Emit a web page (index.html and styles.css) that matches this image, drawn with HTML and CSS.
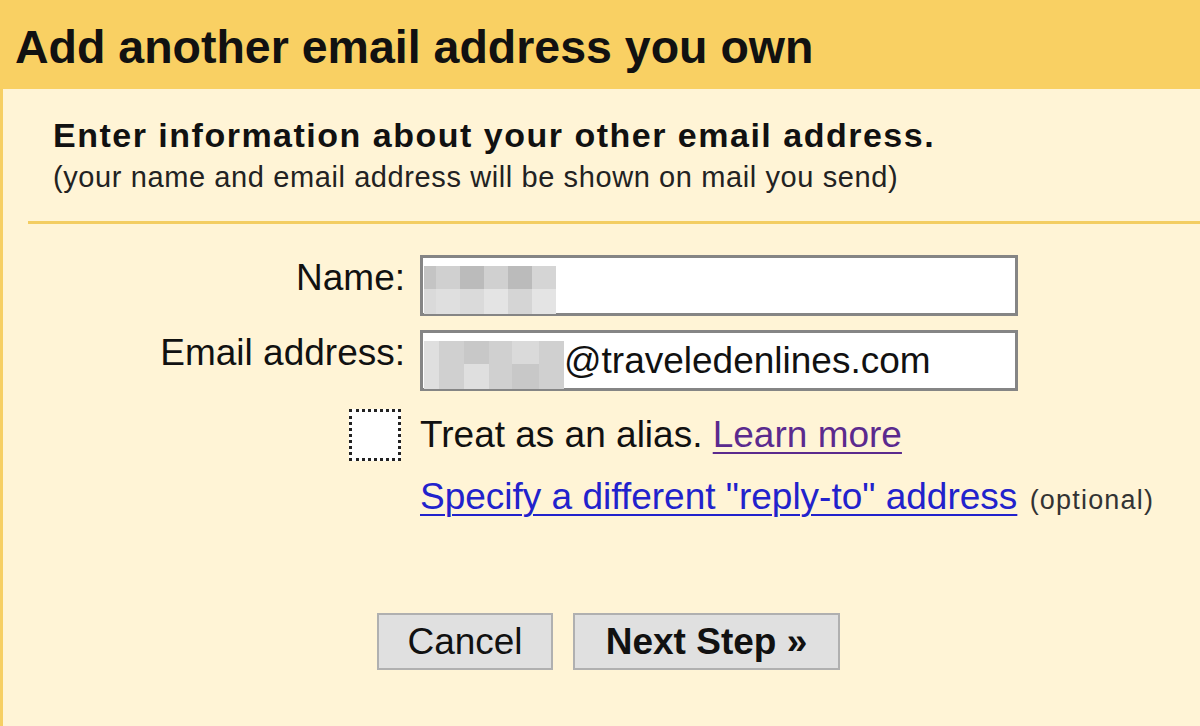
FILE: index.html
```html
<!DOCTYPE html>
<html lang="en">
<head>
  <meta charset="UTF-8" />
  <title>Add another email address you own</title>
  <link rel="stylesheet" href="styles.css">
</head>
<body>

  <!-- Cabeçalho -->
  <div class="header">
    <h1>Add another email address you own</h1>
  </div>

  <div class="panel">
    <div class="intro">
      <h2>Enter information about your other email address.</h2>
      <p class="hint">(your name and email address will be shown on mail you send)</p>
    </div>

    <div class="form">
      <div class="row">
        <label class="label">Name:</label>
        <div class="field">
          <div class="mosaic name-blur">
            <span class="s2"></span><span class="s4"></span><span class="s1"></span><span class="s4"></span><span class="s1"></span><span class="s5"></span>
            <span class="s6"></span><span class="s7"></span><span class="s6"></span><span class="s8"></span><span class="s5"></span><span class="s8"></span>
          </div>
        </div>
      </div>

      <div class="row">
        <label class="label">Email address:</label>
        <div class="field">
          <div class="mosaic email-blur">
            <span class="s7"></span><span class="s4"></span><span class="s3"></span><span class="s4"></span><span class="s6"></span><span class="s4"></span>
            <span class="s7"></span><span class="s4"></span><span class="s7"></span><span class="s4"></span><span class="s3"></span><span class="s4"></span>
          </div>
          <span class="value">@traveledenlines.com</span>
        </div>
      </div>

      <div class="row alias-row">
        <div class="label"><span class="checkbox"></span></div>
        <div>Treat as an alias. <a href="#" class="visited">Learn more</a></div>
      </div>

      <div class="row reply-row">
        <div class="label"></div>
        <div><a href="#" class="link">Specify a different "reply-to" address</a> <span class="optional">(optional)</span></div>
      </div>

      <div class="buttons">
        <button class="btn">Cancel</button>
        <button class="btn btn-next">Next Step &raquo;</button>
      </div>
    </div>
  </div>

</body>
</html>
```

FILE: styles.css
```css
body {
  margin: 0;
  padding: 0;
  background: #fff4d6;
  font-family: "Liberation Sans", Arial, sans-serif;
  color: #111;
}

/* Cabeçalho amarelo */
.header {
  background: #f9d063;
  height: 89px;
  box-sizing: border-box;
  padding: 22px 15px 0;
}

.header h1 {
  margin: 0;
  font-size: 46.5px;
  line-height: 50px;
  font-weight: bold;
}

.panel {
  border-left: 3px solid #f6cf64;
  min-height: calc(100vh - 89px);
}

.intro {
  margin-left: 25px;
  padding: 26px 0 22px 25px;
  border-bottom: 3px solid #f3cd62;
}

.intro h2 {
  margin: 0;
  font-size: 34px;
  line-height: 40px;
  letter-spacing: 1.5px;
}

.hint {
  margin: 0;
  font-size: 29px;
  line-height: 44px;
  letter-spacing: 0.6px;
  color: #222;
}

.form {
  padding-top: 31px;
  font-size: 37px;
}

.row {
  display: flex;
  align-items: center;
  margin-bottom: 14px;
}

.label {
  width: 402px;
  margin-right: 15px;
  text-align: right;
  display: flex;
  justify-content: flex-end;
}

.row > label.label {
  align-self: flex-start;
  line-height: 46px;
}

.field {
  width: 598px;
  height: 61px;
  box-sizing: border-box;
  border: 3px solid #858585;
  background: #fff;
  display: flex;
  align-items: center;
  padding-left: 1px;
}

.value {
  line-height: 1;
}

/* Área pixelada */
.mosaic {
  display: grid;
  grid-template-columns: 12px repeat(5, 24px);
  grid-template-rows: 23px 25px;
  align-self: flex-start;
  margin-top: 8px;
}

.email-blur {
  margin-top: 8px;
  grid-template-columns: 15px 25px 25px 23px 27px 25px;
}

.s1 { background: #bbbbbb; }
.s2 { background: #c4c4c4; }
.s3 { background: #c8c8c8; }
.s4 { background: #d0d0d0; }
.s5 { background: #d5d5d5; }
.s6 { background: #dadada; }
.s7 { background: #dfdfdf; }
.s8 { background: #e4e4e4; }

.alias-row {
  margin-top: 18px;
  margin-bottom: 15px;
}

.checkbox {
  display: block;
  width: 52px;
  height: 52px;
  box-sizing: border-box;
  background: #fff;
  border: 3px dotted #222;
  margin-right: 4px;
}

a {
  text-decoration-thickness: 2px;
  text-underline-offset: 5px;
}

.visited {
  color: #5b2a8e;
}

.link {
  color: #2222cc;
}

.optional {
  font-size: 27px;
  letter-spacing: 1.2px;
  color: #333;
  margin-left: 2px;
}

.buttons {
  display: flex;
  gap: 20px;
  margin-left: 374px;
  margin-top: 95px;
}

.btn {
  height: 57px;
  box-sizing: border-box;
  background: #e0e0e0;
  border: 2px solid #b0b0b0;
  font-family: "Liberation Sans", Arial, sans-serif;
  font-size: 37px;
  color: #111;
  padding: 0;
  width: 176px;
}

.btn-next {
  width: 267px;
  font-weight: bold;
}
```
